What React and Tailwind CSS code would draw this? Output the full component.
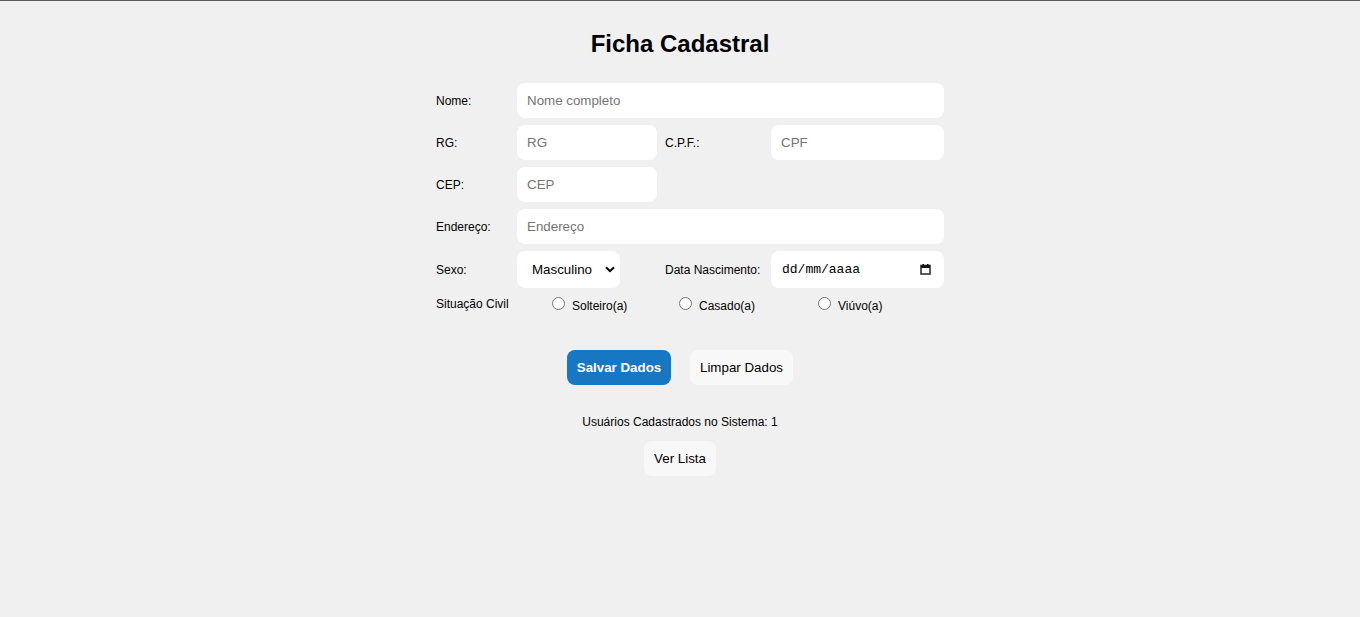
import React from 'react';

const Label = ({ children, className = '' }) => (
    <div className={`text-[12px] text-black ${className}`}>{children}</div>
);

const TextInput = ({ placeholder, className = '' }) => (
    <input
        type="text"
        placeholder={placeholder}
        className={`h-[35px] rounded-lg bg-white px-[10px] text-[13.33px] text-black placeholder:text-[#757575] outline-none ${className}`}
    />
);

const Radio = ({ label }) => (
    <label className="flex items-center text-[12px] text-black">
        <span className="w-[13px] h-[13px] rounded-full border border-[#767676] bg-white mr-[7px] -mt-[2px]" />
        <span className="mt-[2px]">{label}</span>
    </label>
);

const App = () => {
    return (
        <div className="min-h-[617px] bg-[#f0f0f0] border-t border-[#5a5a5a] font-['Liberation_Sans',Arial,sans-serif]">
            <h1 className="pt-[28px] text-center text-[24px] font-bold leading-[30px] text-black">
                Ficha Cadastral
            </h1>

            {/* Form */}
            <div className="w-[528px] mx-auto pl-[20px] mt-[24px]">
                <div className="grid grid-cols-[81px_140px_114px_173px] gap-y-[7px] items-center">
                    <Label>Nome:</Label>
                    <TextInput placeholder="Nome completo" className="col-span-3" />

                    <Label>RG:</Label>
                    <TextInput placeholder="RG" />
                    <Label className="pl-[8px]">C.P.F.:</Label>
                    <TextInput placeholder="CPF" />

                    <Label>CEP:</Label>
                    <TextInput placeholder="CEP" />
                    <div className="col-span-2" />

                    <Label>Endereço:</Label>
                    <TextInput placeholder="Endereço" className="col-span-3" />

                    <Label>Sexo:</Label>
                    <div>
                        <div className="w-[103px] h-[37px] rounded-lg bg-white flex items-center justify-between pl-[15px] pr-[4px] text-[13.33px] text-black">
                            <span>Masculino</span>
                            <svg width="10" height="7" viewBox="0 0 10 7" className="mr-[1px]">
                                <path d="M1 1.2 L5 5.2 L9 1.2" fill="none" stroke="#000" strokeWidth="2" />
                            </svg>
                        </div>
                    </div>
                    <Label className="pl-[8px]">Data Nascimento:</Label>
                    <div className="h-[37px] rounded-lg bg-white flex items-center justify-between pl-[11px] pr-[13px]">
                        <span className="font-['Liberation_Mono',monospace] text-[13px] text-black">dd/mm/aaaa</span>
                        <svg width="11" height="11" viewBox="0 0 11 11">
                            <rect x="1" y="1.5" width="9" height="8.5" fill="none" stroke="#333" strokeWidth="1.6" />
                            <rect x="1" y="1.5" width="9" height="2.5" fill="#111" />
                            <rect x="2.5" y="0" width="1.5" height="2" fill="#111" />
                            <rect x="7" y="0" width="1.5" height="2" fill="#111" />
                        </svg>
                    </div>

                    <Label className="self-start">Situação Civil</Label>
                    <div className="pl-[35px] h-[19px] flex items-center">
                        <Radio label="Solteiro(a)" />
                    </div>
                    <div className="pl-[22px] h-[19px] flex items-center">
                        <Radio label="Casado(a)" />
                    </div>
                    <div className="pl-[47px] h-[19px] flex items-center">
                        <Radio label="Viúvo(a)" />
                    </div>
                </div>
            </div>

            {/* Actions */}
            <div className="flex justify-center gap-[19px] mt-[36px]">
                <button className="h-[35px] w-[104px] rounded-lg bg-[#1877c3] text-white text-[13.33px] font-bold">
                    Salvar Dados
                </button>
                <button className="h-[35px] w-[103px] rounded-lg bg-[#f8f8f8] text-black text-[13.33px]">
                    Limpar Dados
                </button>
            </div>

            <p className="mt-[30px] text-center text-[12px] text-black leading-[14px]">
                Usuários Cadastrados no Sistema: 1
            </p>

            <div className="flex justify-center mt-[12px]">
                <button className="h-[35px] w-[72px] rounded-lg bg-[#f8f8f8] text-black text-[13.33px]">
                    Ver Lista
                </button>
            </div>
        </div>
    );
};

export default App;
